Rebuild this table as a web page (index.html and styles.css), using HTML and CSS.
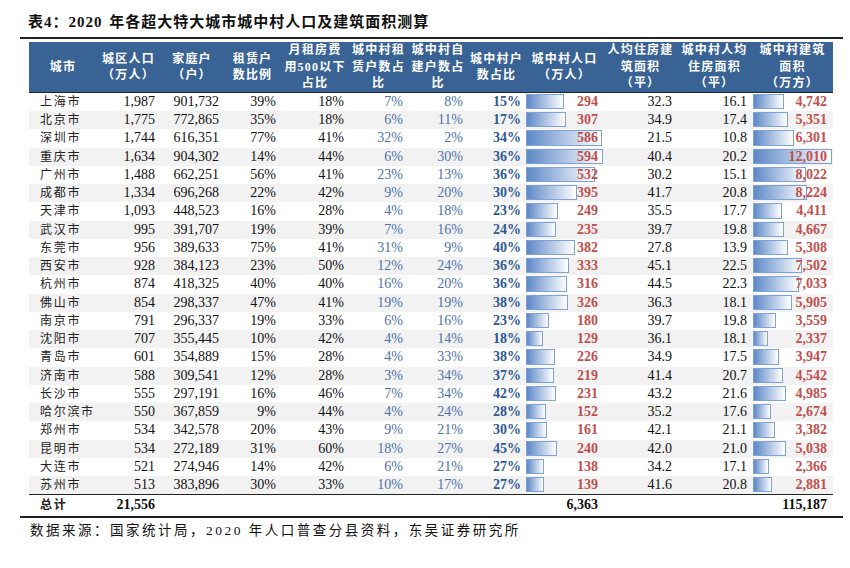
FILE: index.html
```html
<!DOCTYPE html>
<html lang="zh-CN">
<head>
<meta charset="utf-8">
<title>表4</title>
<link rel="stylesheet" href="styles.css">
</head>
<body>
<div class="page">
  <h1 class="title">表4：2020 年各超大特大城市城中村人口及建筑面积测算</h1>
  <div class="rule"></div>
  <table class="data">
    <colgroup>
      <col class="c1"><col class="c2"><col class="c3"><col class="c4"><col class="c5"><col class="c6">
      <col class="c7"><col class="c8"><col class="c9"><col class="c10"><col class="c11"><col class="c12">
    </colgroup>
    <thead>
      <tr>
        <th>城市</th>
        <th>城区人口<br>（万人）</th>
        <th>家庭户<br>（户）</th>
        <th>租赁户<br>数比例</th>
        <th>月租房费<br>用500以下<br>占比</th>
        <th>城中村租<br>赁户数占<br>比</th>
        <th>城中村自<br>建户数占<br>比</th>
        <th>城中村户<br>数占比</th>
        <th>城中村人口<br>（万人）</th>
        <th>人均住房建<br>筑面积<br>（平）</th>
        <th>城中村人均<br>住房面积<br>（平）</th>
        <th>城中村建筑<br>面积<br>（万方）</th>
      </tr>
    </thead>
    <tbody>
      <tr><td class="city">上海市</td><td>1,987</td><td>901,732</td><td>39%</td><td>18%</td><td class="lb">7%</td><td class="lb">8%</td><td class="db">15%</td><td class="barcell"><span class="bar" style="width:38px"></span><span class="val">294</span></td><td>32.3</td><td>16.1</td><td class="barcell"><span class="bar" style="width:31px"></span><span class="val">4,742</span></td></tr>
      <tr><td class="city">北京市</td><td>1,775</td><td>772,865</td><td>35%</td><td>18%</td><td class="lb">6%</td><td class="lb">11%</td><td class="db">17%</td><td class="barcell"><span class="bar" style="width:40px"></span><span class="val">307</span></td><td>34.9</td><td>17.4</td><td class="barcell"><span class="bar" style="width:35px"></span><span class="val">5,351</span></td></tr>
      <tr><td class="city">深圳市</td><td>1,744</td><td>616,351</td><td>77%</td><td>41%</td><td class="lb">32%</td><td class="lb">2%</td><td class="db">34%</td><td class="barcell"><span class="bar" style="width:76px"></span><span class="val">586</span></td><td>21.5</td><td>10.8</td><td class="barcell"><span class="bar" style="width:41px"></span><span class="val">6,301</span></td></tr>
      <tr><td class="city">重庆市</td><td>1,634</td><td>904,302</td><td>14%</td><td>44%</td><td class="lb">6%</td><td class="lb">30%</td><td class="db">36%</td><td class="barcell"><span class="bar" style="width:77px"></span><span class="val">594</span></td><td>40.4</td><td>20.2</td><td class="barcell"><span class="bar" style="width:79px"></span><span class="val">12,010</span></td></tr>
      <tr><td class="city">广州市</td><td>1,488</td><td>662,251</td><td>56%</td><td>41%</td><td class="lb">23%</td><td class="lb">13%</td><td class="db">36%</td><td class="barcell"><span class="bar" style="width:69px"></span><span class="val">532</span></td><td>30.2</td><td>15.1</td><td class="barcell"><span class="bar" style="width:53px"></span><span class="val">8,022</span></td></tr>
      <tr><td class="city">成都市</td><td>1,334</td><td>696,268</td><td>22%</td><td>42%</td><td class="lb">9%</td><td class="lb">20%</td><td class="db">30%</td><td class="barcell"><span class="bar" style="width:51px"></span><span class="val">395</span></td><td>41.7</td><td>20.8</td><td class="barcell"><span class="bar" style="width:54px"></span><span class="val">8,224</span></td></tr>
      <tr><td class="city">天津市</td><td>1,093</td><td>448,523</td><td>16%</td><td>28%</td><td class="lb">4%</td><td class="lb">18%</td><td class="db">23%</td><td class="barcell"><span class="bar" style="width:32px"></span><span class="val">249</span></td><td>35.5</td><td>17.7</td><td class="barcell"><span class="bar" style="width:29px"></span><span class="val">4,411</span></td></tr>
      <tr><td class="city">武汉市</td><td>995</td><td>391,707</td><td>19%</td><td>39%</td><td class="lb">7%</td><td class="lb">16%</td><td class="db">24%</td><td class="barcell"><span class="bar" style="width:30px"></span><span class="val">235</span></td><td>39.7</td><td>19.8</td><td class="barcell"><span class="bar" style="width:31px"></span><span class="val">4,667</span></td></tr>
      <tr><td class="city">东莞市</td><td>956</td><td>389,633</td><td>75%</td><td>41%</td><td class="lb">31%</td><td class="lb">9%</td><td class="db">40%</td><td class="barcell"><span class="bar" style="width:49px"></span><span class="val">382</span></td><td>27.8</td><td>13.9</td><td class="barcell"><span class="bar" style="width:35px"></span><span class="val">5,308</span></td></tr>
      <tr><td class="city">西安市</td><td>928</td><td>384,123</td><td>23%</td><td>50%</td><td class="lb">12%</td><td class="lb">24%</td><td class="db">36%</td><td class="barcell"><span class="bar" style="width:43px"></span><span class="val">333</span></td><td>45.1</td><td>22.5</td><td class="barcell"><span class="bar" style="width:49px"></span><span class="val">7,502</span></td></tr>
      <tr><td class="city">杭州市</td><td>874</td><td>418,325</td><td>40%</td><td>40%</td><td class="lb">16%</td><td class="lb">20%</td><td class="db">36%</td><td class="barcell"><span class="bar" style="width:41px"></span><span class="val">316</span></td><td>44.5</td><td>22.3</td><td class="barcell"><span class="bar" style="width:46px"></span><span class="val">7,033</span></td></tr>
      <tr><td class="city">佛山市</td><td>854</td><td>298,337</td><td>47%</td><td>41%</td><td class="lb">19%</td><td class="lb">19%</td><td class="db">38%</td><td class="barcell"><span class="bar" style="width:42px"></span><span class="val">326</span></td><td>36.3</td><td>18.1</td><td class="barcell"><span class="bar" style="width:39px"></span><span class="val">5,905</span></td></tr>
      <tr><td class="city">南京市</td><td>791</td><td>296,337</td><td>19%</td><td>33%</td><td class="lb">6%</td><td class="lb">16%</td><td class="db">23%</td><td class="barcell"><span class="bar" style="width:23px"></span><span class="val">180</span></td><td>39.7</td><td>19.8</td><td class="barcell"><span class="bar" style="width:23px"></span><span class="val">3,559</span></td></tr>
      <tr><td class="city">沈阳市</td><td>707</td><td>355,445</td><td>10%</td><td>42%</td><td class="lb">4%</td><td class="lb">14%</td><td class="db">18%</td><td class="barcell"><span class="bar" style="width:17px"></span><span class="val">129</span></td><td>36.1</td><td>18.1</td><td class="barcell"><span class="bar" style="width:15px"></span><span class="val">2,337</span></td></tr>
      <tr><td class="city">青岛市</td><td>601</td><td>354,889</td><td>15%</td><td>28%</td><td class="lb">4%</td><td class="lb">33%</td><td class="db">38%</td><td class="barcell"><span class="bar" style="width:29px"></span><span class="val">226</span></td><td>34.9</td><td>17.5</td><td class="barcell"><span class="bar" style="width:26px"></span><span class="val">3,947</span></td></tr>
      <tr><td class="city">济南市</td><td>588</td><td>309,541</td><td>12%</td><td>28%</td><td class="lb">3%</td><td class="lb">34%</td><td class="db">37%</td><td class="barcell"><span class="bar" style="width:28px"></span><span class="val">219</span></td><td>41.4</td><td>20.7</td><td class="barcell"><span class="bar" style="width:30px"></span><span class="val">4,542</span></td></tr>
      <tr><td class="city">长沙市</td><td>555</td><td>297,191</td><td>16%</td><td>46%</td><td class="lb">7%</td><td class="lb">34%</td><td class="db">42%</td><td class="barcell"><span class="bar" style="width:30px"></span><span class="val">231</span></td><td>43.2</td><td>21.6</td><td class="barcell"><span class="bar" style="width:33px"></span><span class="val">4,985</span></td></tr>
      <tr><td class="city">哈尔滨市</td><td>550</td><td>367,859</td><td>9%</td><td>44%</td><td class="lb">4%</td><td class="lb">24%</td><td class="db">28%</td><td class="barcell"><span class="bar" style="width:20px"></span><span class="val">152</span></td><td>35.2</td><td>17.6</td><td class="barcell"><span class="bar" style="width:18px"></span><span class="val">2,674</span></td></tr>
      <tr><td class="city">郑州市</td><td>534</td><td>342,578</td><td>20%</td><td>43%</td><td class="lb">9%</td><td class="lb">21%</td><td class="db">30%</td><td class="barcell"><span class="bar" style="width:21px"></span><span class="val">161</span></td><td>42.1</td><td>21.1</td><td class="barcell"><span class="bar" style="width:22px"></span><span class="val">3,382</span></td></tr>
      <tr><td class="city">昆明市</td><td>534</td><td>272,189</td><td>31%</td><td>60%</td><td class="lb">18%</td><td class="lb">27%</td><td class="db">45%</td><td class="barcell"><span class="bar" style="width:31px"></span><span class="val">240</span></td><td>42.0</td><td>21.0</td><td class="barcell"><span class="bar" style="width:33px"></span><span class="val">5,038</span></td></tr>
      <tr><td class="city">大连市</td><td>521</td><td>274,946</td><td>14%</td><td>42%</td><td class="lb">6%</td><td class="lb">21%</td><td class="db">27%</td><td class="barcell"><span class="bar" style="width:18px"></span><span class="val">138</span></td><td>34.2</td><td>17.1</td><td class="barcell"><span class="bar" style="width:16px"></span><span class="val">2,366</span></td></tr>
      <tr><td class="city">苏州市</td><td>513</td><td>383,896</td><td>30%</td><td>33%</td><td class="lb">10%</td><td class="lb">17%</td><td class="db">27%</td><td class="barcell"><span class="bar" style="width:18px"></span><span class="val">139</span></td><td>41.6</td><td>20.8</td><td class="barcell"><span class="bar" style="width:19px"></span><span class="val">2,881</span></td></tr>
    </tbody>
    <tfoot>
      <tr><td class="city">总计</td><td>21,556</td><td></td><td></td><td></td><td></td><td></td><td></td><td class="tot">6,363</td><td></td><td></td><td class="tot">115,187</td></tr>
    </tfoot>
  </table>
  <div class="rule"></div>
  <p class="source">数据来源：国家统计局，2020 年人口普查分县资料，东吴证券研究所</p>
</div>
</body>
</html>
```

FILE: styles.css
```css
html, body {
  margin: 0;
  padding: 0;
  background: #fff;
}

body {
  font-family: "Liberation Serif", "Noto Sans CJK SC", serif;
  color: #111;
}

.page {
  width: 823px;
  margin-left: 20px;
  padding-top: 12px;
}

.title {
  margin: 0 0 5px 8px;
  font-size: 15px;
  line-height: 20px;
  font-weight: bold;
  letter-spacing: 1px;
  word-spacing: 2px;
  color: #111;
}

.rule {
  height: 2px;
  background: #222;
}

.data {
  margin: 3px 0 0 9px;
  width: 804px;
  table-layout: fixed;
  border-collapse: collapse;
  border-spacing: 0;
}

.c1 { width: 68px; }
.c2 { width: 63px; }
.c3 { width: 64px; }
.c4 { width: 57px; }
.c5 { width: 68px; }
.c6 { width: 59px; }
.c7 { width: 60px; }
.c8 { width: 57px; }
.c9 { width: 79px; }
.c10 { width: 73px; }
.c11 { width: 75px; }
.c12 { width: 81px; }

.data th {
  height: 50px;
  padding: 0;
  background: #3a6395;
  color: #fff;
  font-size: 12px;
  line-height: 16.5px;
  font-weight: bold;
  letter-spacing: 1.2px;
  text-align: center;
  vertical-align: middle;
  border-bottom: 1px solid #1b2534;
  white-space: nowrap;
}

.data tbody tr {
  height: 18.25px;
}

.data tbody tr:nth-child(even) td {
  background: #f2f2f2;
}

.data td {
  padding: 0 5px 0 0;
  font-size: 14px;
  line-height: 18px;
  text-align: right;
  vertical-align: middle;
  white-space: nowrap;
  color: #111;
}

.data td.city {
  text-align: left;
  padding-left: 11px;
  font-size: 12px;
  letter-spacing: 1.7px;
  color: #222;
}

.data td.lb {
  color: #4e72a8;
}

.data td.db {
  color: #2f5a91;
  font-weight: bold;
  padding-right: 4px;
}

.data td.barcell {
  position: relative;
  padding-right: 6px;
}

.bar {
  position: absolute;
  left: 1px;
  top: 1px;
  bottom: 2px;
  box-sizing: border-box;
  border: 1px solid #7ea2d8;
  background: linear-gradient(to right, #5d88c7, #ffffff);
}

.val {
  position: relative;
  color: #c0504d;
  font-weight: bold;
}

.data tbody tr:last-child td {
  border-bottom: 1px solid #222;
}

.data tfoot tr {
  height: 21px;
}

.data tfoot td {
  font-weight: bold;
  color: #111;
}

.data tfoot td.tot {
  padding-right: 6px;
}

.source {
  margin: 3px 0 0 10px;
  font-size: 13.5px;
  line-height: 20px;
  letter-spacing: 2.5px;
  color: #111;
}
```
